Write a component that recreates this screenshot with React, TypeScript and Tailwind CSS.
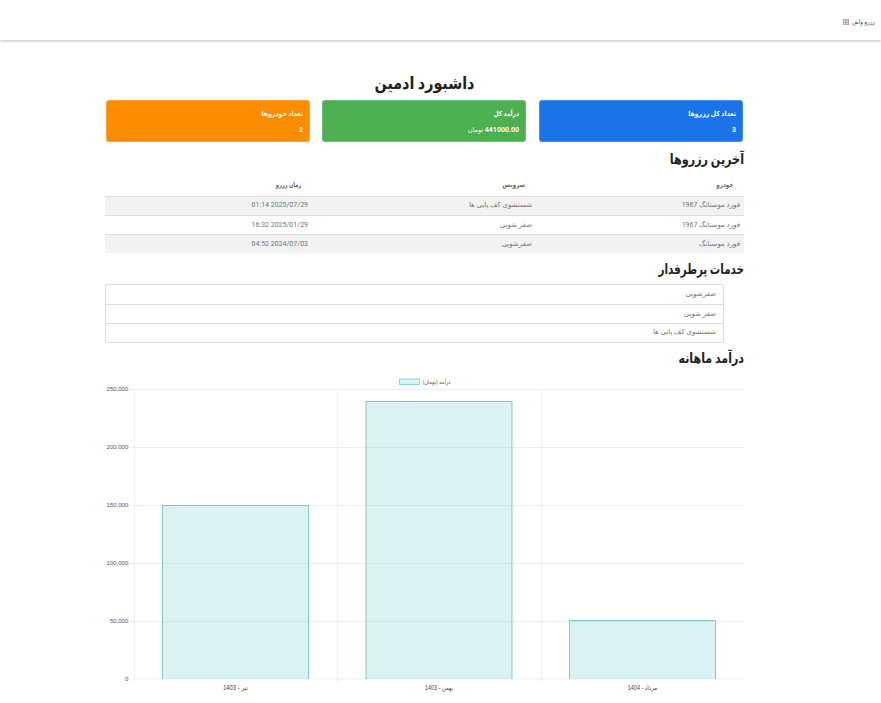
const font = "font-['Roboto','DejaVu_Sans',sans-serif]";

const cards = [
  { title: 'تعداد کل رزروها', fit: 'scale-x-[0.88]', value: <>3</>, box: 'bg-[#1a73e8]', gap: 'ml-[13px]' },
  { title: 'درآمد کل', fit: 'scale-x-[0.84]', value: <>441000.00 <span className="text-[6.5px] font-normal">تومان</span></>, box: 'bg-[#4caf50]', gap: 'ml-3' },
  { title: 'تعداد خودروها', fit: 'scale-x-[0.88]', value: <>2</>, box: 'bg-[#fb8c00]', gap: '' },
];

const columns = [
  { label: 'خودرو', fit: 'scale-x-[0.8]' },
  { label: 'سرویس', fit: 'scale-x-[0.81]' },
  { label: 'زمان رزرو', fit: 'scale-x-[0.72]' },
];

const rows = [
  { cells: ['فورد موستانگ 1967', 'شستشوی کف پایی ها'], time: '01:14 2025/07/29', pad: 'pb-[1px]' },
  { cells: ['فورد موستانگ 1967', 'صفر شویی'], time: '16:32 2025/01/29', pad: 'pt-[1px]' },
  { cells: ['فورد موستانگ', 'صفرشویی'], time: '04:52 2024/07/03', pad: 'pt-[1px]' },
];

const services = ['صفرشویی', 'صفر شویی', 'شستشوی کف پایی ها'];

const ticks = [
  { label: '250,000', y: 389.5 },
  { label: '200,000', y: 447.5 },
  { label: '150,000', y: 505.5 },
  { label: '100,000', y: 563.5 },
  { label: '50,000', y: 621.5 },
  { label: '0', y: 679 },
];

const bars = [
  { x: 162.5, y: 505.5, month: 'تیر', year: '1403', width: 25 },
  { x: 366, y: 401.5, month: 'بهمن', year: '1403', width: 28 },
  { x: 569.5, y: 620.5, month: 'مرداد', year: '1404', width: 29.5 },
];

function Chart() {
  return (
    <svg className="block" width="639" height="330" viewBox="105 370 639 330" direction="ltr">
      {ticks.map((t) => (
        <g key={t.label}>
          <line x1="129" x2="744" y1={t.y} y2={t.y} stroke="#000" strokeOpacity="0.065" />
          <text x="128.3" y={t.y + 1.9} textAnchor="end" fontSize="6" fill="#555" fontFamily="Liberation Sans, sans-serif">{t.label}</text>
        </g>
      ))}
      {[134.5, 337.5, 541.5].map((x) => (
        <line key={x} x1={x} x2={x} y1="390" y2="683" stroke="#000" strokeOpacity="0.05" />
      ))}
      {bars.map((b) => (
        <g key={b.x}>
          <rect x={b.x} y={b.y} width="146" height={679 - b.y} fill="#4bc0c0" fillOpacity="0.2" />
          <path d={`M${b.x} 679V${b.y}H${b.x + 146}V679`} fill="none" stroke="#4fb9b6" strokeOpacity="0.7" />
          <text x={b.x + 73} y="690" textAnchor="middle" fontSize="6.3" fill="#444" textLength={b.width} lengthAdjust="spacingAndGlyphs" fontFamily="Liberation Sans, DejaVu Sans, sans-serif" direction="rtl">{`${b.month} - ${b.year}`}</text>
        </g>
      ))}
      <rect x="399.5" y="379" width="20" height="5.5" fill="#dbf2f2" stroke="#4bc0c0" strokeOpacity="0.6" />
      <text x="422.5" y="383.5" fontSize="6" fill="#555" textLength="28" lengthAdjust="spacingAndGlyphs" fontFamily="Liberation Sans, DejaVu Sans, sans-serif">درآمد (تومان)</text>
    </svg>
  );
}

export default function App() {
  return (
    <div dir="rtl" className={`h-[703px] w-[881px] overflow-hidden bg-white ${font}`}>
      <header className="flex h-10 items-start pr-[6px] pt-[18px] text-[6.5px] leading-[9px] text-[#444] shadow-[0_1px_3px_rgba(0,0,0,0.25)]">
        <span className="w-[26px] origin-right scale-x-[0.85] whitespace-nowrap">رزرو واش</span>
        <svg width="6" height="6" viewBox="0 0 6 6" className="mt-[1px] shrink-0" fill="none" stroke="#888" strokeWidth="0.8">
          <path d="M0 0.5H2.5M3.5 0.5H6M0 2H2.5M3.5 2H6M0 3.7H2.5M3.5 3.7H6M0 5.4H2.5M3.5 5.4H6M0.5 0V6M2.5 0V6M3.8 0V6M5.5 0V6" strokeOpacity="0.75" />
        </svg>
      </header>
      <main className="mr-[137px] w-[639px] pt-[30px]">
        <h1 className="h-[30px] scale-x-[0.84] text-center text-[17px] font-bold leading-[27px] text-[#222]">داشبورد ادمین</h1>
        <section className="flex pl-[1px] pr-[1px]">
          {cards.map((c) => (
            <div key={c.title} className={`h-[42px] w-[204px] shrink-0 rounded-[3px] border border-white/20 pr-[6px] pt-[6px] text-white ${c.box} ${c.gap}`}>
              <h2 className={`h-[14px] origin-right text-[7px] font-bold leading-[14px] ${c.fit}`}>{c.title}</h2>
              <p className="text-[7px] font-bold leading-[18px]">{c.value}</p>
            </div>
          ))}
        </section>
        <h2 className="h-[33px] origin-right scale-x-[0.8] text-[14px] font-bold leading-[34px] text-[#222]">آخرین رزروها</h2>
        <table className="w-full table-fixed border-collapse text-[7px] leading-[10px] text-[#757575]">
          <colgroup>
            <col className="w-[208px]" />
            <col className="w-[224px]" />
            <col className="w-[207px]" />
          </colgroup>
          <thead>
            <tr className="h-[21px] text-right text-[#666]">
              {columns.map((c) => (
                <th key={c.label} className="p-0 pr-[11px]">
                  <span className={`inline-block origin-right ${c.fit}`}>{c.label}</span>
                </th>
              ))}
            </tr>
          </thead>
          <tbody>
            {rows.map((r) => (
              <tr key={r.time} className="h-[19px] border-t border-[#dedede] odd:bg-[#f2f2f2]">
                {r.cells.map((cell) => (
                  <td key={cell} className={`pr-1 ${r.pad}`}>{cell}</td>
                ))}
                <td className={`pr-1 ${r.pad}`}><bdi dir="ltr">{r.time}</bdi></td>
              </tr>
            ))}
          </tbody>
        </table>
        <h2 className="h-[31px] origin-right scale-x-[0.74] text-[14px] font-bold leading-[32px] text-[#222]">خدمات پرطرفدار</h2>
        <ul className="mr-5 rounded-[2px] border border-[#dcdcdc] text-[7px] text-[#757575]">
          {services.map((s) => (
            <li key={s} className="h-[19px] border-b border-[#dcdcdc] pr-[7px] leading-[18px] first:h-5 last:h-[18px] last:border-b-0 last:leading-[16px]">{s}</li>
          ))}
        </ul>
        <h2 className="h-[27px] origin-right scale-x-[0.79] text-[14px] font-bold leading-[31px] text-[#222]">درآمد ماهانه</h2>
        <Chart />
      </main>
    </div>
  );
}
